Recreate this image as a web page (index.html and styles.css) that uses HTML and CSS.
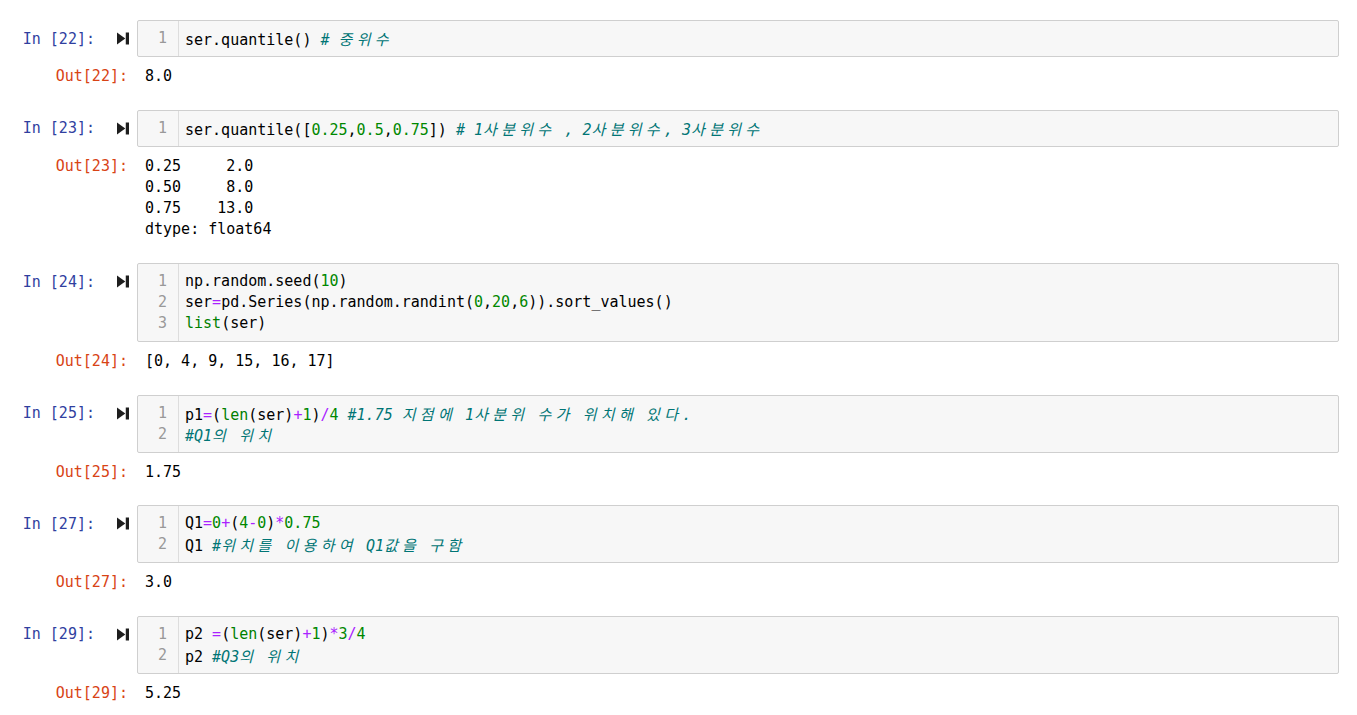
FILE: index.html
```html
<!DOCTYPE html>
<html lang="ko">
<head>
<meta charset="utf-8">
<title>Notebook</title>
<link rel="stylesheet" href="styles.css">
</head>
<body>
<div class="notebook">

  <div class="cell">
    <div class="input">
      <div class="prompt in-prompt"><span>In [22]:</span><svg class="run" viewBox="0 0 13 13"><polygon points="0,0 9,6.5 0,13"/><rect x="9.5" y="0" width="3.5" height="13"/></svg></div>
      <div class="editor">
        <div class="gutter"><div>1</div></div>
        <div class="code">
          <div class="line">ser.quantile() <span class="cm"># <span class="ko">중위수</span></span></div>
        </div>
      </div>
    </div>
    <div class="output">
      <div class="prompt out-prompt">Out[22]:</div>
      <pre class="out-text">8.0</pre>
    </div>
  </div>

  <div class="cell">
    <div class="input">
      <div class="prompt in-prompt"><span>In [23]:</span><svg class="run" viewBox="0 0 13 13"><polygon points="0,0 9,6.5 0,13"/><rect x="9.5" y="0" width="3.5" height="13"/></svg></div>
      <div class="editor">
        <div class="gutter"><div>1</div></div>
        <div class="code">
          <div class="line">ser.quantile([<span class="nu">0.25</span>,<span class="nu">0.5</span>,<span class="nu">0.75</span>]) <span class="cm"># 1<span class="ko">사분위수</span> , 2<span class="ko">사분위수</span>, 3<span class="ko">사분위수</span></span></div>
        </div>
      </div>
    </div>
    <div class="output">
      <div class="prompt out-prompt">Out[23]:</div>
      <pre class="out-text">0.25     2.0
0.50     8.0
0.75    13.0
dtype: float64</pre>
    </div>
  </div>

  <div class="cell">
    <div class="input">
      <div class="prompt in-prompt"><span>In [24]:</span><svg class="run" viewBox="0 0 13 13"><polygon points="0,0 9,6.5 0,13"/><rect x="9.5" y="0" width="3.5" height="13"/></svg></div>
      <div class="editor">
        <div class="gutter"><div>1</div><div>2</div><div>3</div></div>
        <div class="code">
          <div class="line">np.random.seed(<span class="nu">10</span>)</div>
          <div class="line">ser<span class="op">=</span>pd.Series(np.random.randint(<span class="nu">0</span>,<span class="nu">20</span>,<span class="nu">6</span>)).sort_values()</div>
          <div class="line"><span class="bi">list</span>(ser)</div>
        </div>
      </div>
    </div>
    <div class="output">
      <div class="prompt out-prompt">Out[24]:</div>
      <pre class="out-text">[0, 4, 9, 15, 16, 17]</pre>
    </div>
  </div>

  <div class="cell">
    <div class="input">
      <div class="prompt in-prompt"><span>In [25]:</span><svg class="run" viewBox="0 0 13 13"><polygon points="0,0 9,6.5 0,13"/><rect x="9.5" y="0" width="3.5" height="13"/></svg></div>
      <div class="editor">
        <div class="gutter"><div>1</div><div>2</div></div>
        <div class="code">
          <div class="line">p1<span class="op">=</span>(<span class="bi">len</span>(ser)<span class="op">+</span><span class="nu">1</span>)<span class="op">/</span><span class="nu">4</span> <span class="cm">#1.75 <span class="ko">지점에</span> 1<span class="ko">사분위</span> <span class="ko">수가</span> <span class="ko">위치해</span> <span class="ko">있다</span>.</span></div>
          <div class="line"><span class="cm">#Q1<span class="ko">의</span> <span class="ko">위치</span></span></div>
        </div>
      </div>
    </div>
    <div class="output">
      <div class="prompt out-prompt">Out[25]:</div>
      <pre class="out-text">1.75</pre>
    </div>
  </div>

  <div class="cell">
    <div class="input">
      <div class="prompt in-prompt"><span>In [27]:</span><svg class="run" viewBox="0 0 13 13"><polygon points="0,0 9,6.5 0,13"/><rect x="9.5" y="0" width="3.5" height="13"/></svg></div>
      <div class="editor">
        <div class="gutter"><div>1</div><div>2</div></div>
        <div class="code">
          <div class="line">Q1<span class="op">=</span><span class="nu">0</span><span class="op">+</span>(<span class="nu">4</span><span class="op">-</span><span class="nu">0</span>)<span class="op">*</span><span class="nu">0.75</span></div>
          <div class="line">Q1 <span class="cm">#<span class="ko">위치를</span> <span class="ko">이용하여</span> Q1<span class="ko">값을</span> <span class="ko">구함</span></span></div>
        </div>
      </div>
    </div>
    <div class="output">
      <div class="prompt out-prompt">Out[27]:</div>
      <pre class="out-text">3.0</pre>
    </div>
  </div>

  <div class="cell">
    <div class="input">
      <div class="prompt in-prompt"><span>In [29]:</span><svg class="run" viewBox="0 0 13 13"><polygon points="0,0 9,6.5 0,13"/><rect x="9.5" y="0" width="3.5" height="13"/></svg></div>
      <div class="editor">
        <div class="gutter"><div>1</div><div>2</div></div>
        <div class="code">
          <div class="line">p2 <span class="op">=</span>(<span class="bi">len</span>(ser)<span class="op">+</span><span class="nu">1</span>)<span class="op">*</span><span class="nu">3</span><span class="op">/</span><span class="nu">4</span></div>
          <div class="line">p2 <span class="cm">#Q3<span class="ko">의</span> <span class="ko">위치</span></span></div>
        </div>
      </div>
    </div>
    <div class="output">
      <div class="prompt out-prompt">Out[29]:</div>
      <pre class="out-text">5.25</pre>
    </div>
  </div>

</div>
</body>
</html>
```

FILE: styles.css
```css
html, body {
  margin: 0;
  padding: 0;
  background: #ffffff;
}

body {
  font-family: "DejaVu Sans Mono", "Liberation Mono", "Noto Sans CJK KR", monospace;
  font-size: 15px;
  color: #000000;
}

.notebook {
  padding: 20px 18px 0 0;
}

.cell {
  margin-bottom: 22.3px;
}

.input {
  display: flex;
  align-items: flex-start;
}

.prompt {
  flex: 0 0 137px;
  width: 137px;
  box-sizing: border-box;
  white-space: pre;
}

.in-prompt {
  display: flex;
  justify-content: flex-end;
  align-items: center;
  height: 37px;
  padding-right: 7px;
  color: #303f9f;
}

.run {
  width: 12px;
  height: 13px;
  margin-left: 22px;
  margin-right: 1px;
  fill: #1e1e1e;
}

.editor {
  flex: 1;
  display: flex;
  background: #f7f7f7;
  border: 1px solid #cfcfcf;
  border-radius: 2px;
  line-height: 21px;
}

.gutter {
  width: 29px;
  padding: 7px 11px 7px 0;
  border-right: 1px solid #dddddd;
  text-align: right;
  color: #999999;
}

.code {
  padding: 7px 0 7px 6px;
}

.line {
  height: 21px;
  white-space: pre;
}

.cm {
  color: #007575;
  font-style: italic;
}

.nu {
  color: #008800;
}

.bi {
  color: #008000;
}

.op {
  color: #aa22ff;
}

.ko {
  font-family: "Noto Sans CJK KR", sans-serif;
  letter-spacing: 4.3px;
}

.output {
  display: flex;
  margin-top: 9px;
}

.out-prompt {
  text-align: right;
  padding-right: 9px;
  color: #d84315;
  line-height: 21.3px;
}

.out-text {
  margin: 0;
  padding-left: 8px;
  font-family: inherit;
  font-size: inherit;
  line-height: 21.3px;
}
```
